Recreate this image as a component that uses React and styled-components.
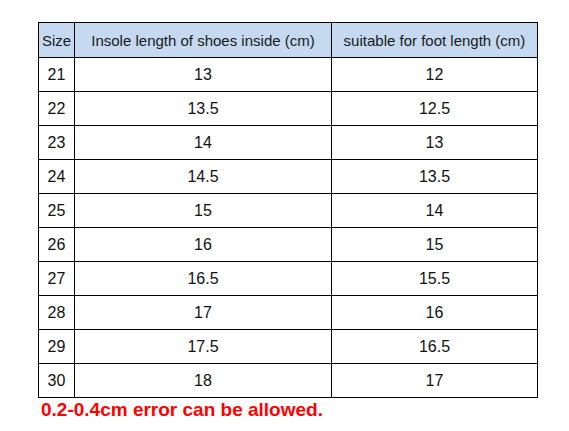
import React from 'react'
import styled, { createGlobalStyle } from 'styled-components'

const GlobalStyle = createGlobalStyle`
    html, body {
        margin: 0;
        padding: 0;
        background: #ffffff;
    }
`;

const rows = [
    ['21', '13', '12'],
    ['22', '13.5', '12.5'],
    ['23', '14', '13'],
    ['24', '14.5', '13.5'],
    ['25', '15', '14'],
    ['26', '16', '15'],
    ['27', '16.5', '15.5'],
    ['28', '17', '16'],
    ['29', '17.5', '16.5'],
    ['30', '18', '17'],
]

export default function App() {
    return (
        <Page>
            <GlobalStyle />
            <Chart>
                <colgroup>
                    <col style={{ width: 36 }} />
                    <col style={{ width: 257 }} />
                    <col style={{ width: 206 }} />
                </colgroup>
                <thead>
                    <tr>
                        <HeadCell>Size</HeadCell>
                        <HeadCell>Insole length of shoes inside (cm)</HeadCell>
                        <HeadCell>suitable for foot length (cm)</HeadCell>
                    </tr>
                </thead>
                <tbody>
                    {rows.map((r) => (
                        <tr key={r[0]}>
                            <Cell>{r[0]}</Cell>
                            <Cell>{r[1]}</Cell>
                            <Cell>{r[2]}</Cell>
                        </tr>
                    ))}
                </tbody>
            </Chart>
            <Note>0.2-0.4cm error can be allowed.</Note>
        </Page>
    )
}

const Page = styled.div`
    width: 569px;
    height: 431px;
    padding: 22px 0 0 38px;
    box-sizing: border-box;
    font-family: 'Liberation Sans', Arial, sans-serif;
`;

const Chart = styled.table`
    border-collapse: collapse;
    table-layout: fixed;
    width: 500px;
`;

const HeadCell = styled.th`
    height: 34px;
    padding: 0;
    border: 1px solid #000000;
    background: #c5d9f1;
    font-weight: normal;
    font-size: 15px;
    color: #1a1a1a;
    text-align: center;
    white-space: nowrap;
`;

const Cell = styled.td`
    height: 33px;
    padding: 0;
    border: 1px solid #000000;
    font-size: 16px;
    color: #111111;
    text-align: center;
`;

const Note = styled.div`
    margin: 1px 0 0 3px;
    color: #ff0000;
    font-weight: bold;
    font-size: 19px;
    line-height: 22px;
`;
